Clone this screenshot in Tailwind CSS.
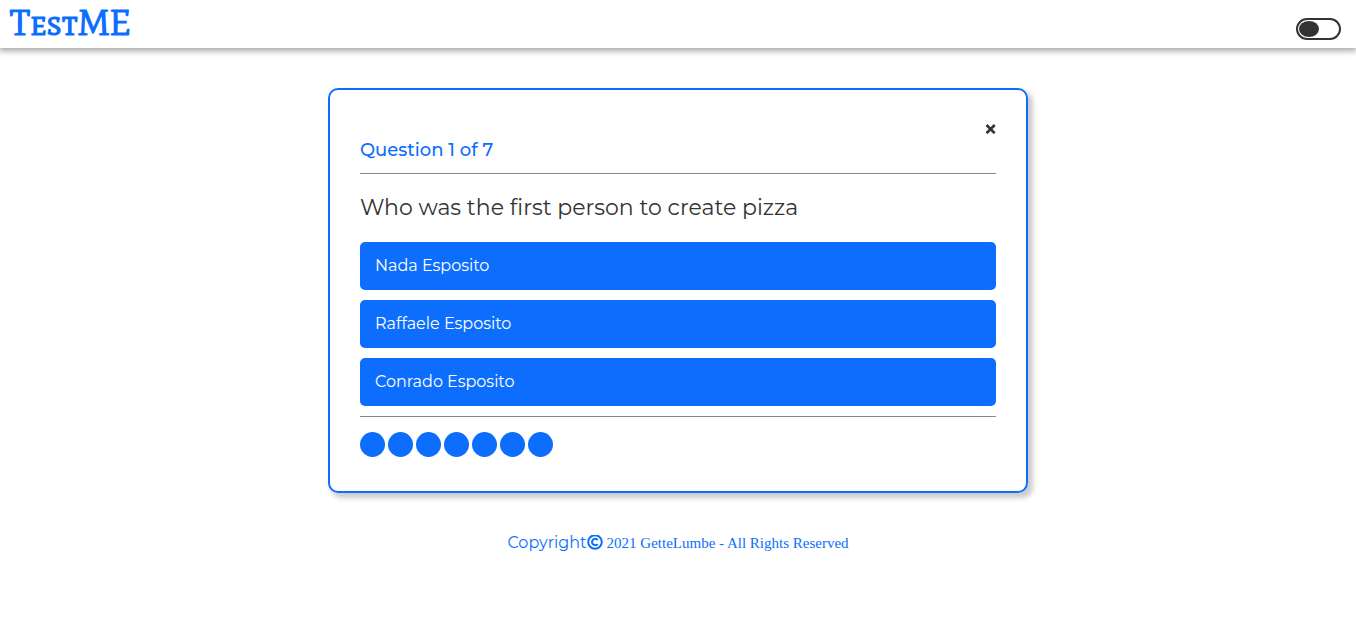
<!DOCTYPE html>
<html lang="en">
<head>
<meta charset="utf-8">
<meta name="viewport" content="width=device-width, initial-scale=1">
<title>TestME</title>
<script src="https://cdn.jsdelivr.net/npm/@tailwindcss/browser@4"></script>
</head>
<body class="bg-white font-['Montserrat','Inter',sans-serif] text-[#333333]">
<header class="flex h-12 items-start justify-between bg-white pl-[10px] pr-[15px] shadow-[0_2px_6px_1px_rgba(0,0,0,0.35)]">
  <a href="#" class="pt-[3px] font-['Mate_SC','Liberation_Serif',serif] text-[35px] leading-[40px] font-bold text-[#0d6efd]">TestME</a>
  <button type="button" role="switch" aria-checked="false" aria-label="Dark mode" class="mt-[18px] flex h-[22px] w-[45px] items-center rounded-full border-2 border-[#333333] pl-px">
    <span class="h-4 w-5 rounded-[50%] bg-[#333333]"></span>
  </button>
</header>
<main class="mx-auto mt-10 max-w-[700px] rounded-[10px] border-2 border-[#0d6efd] p-[30px] shadow-[4px_4px_5px_1px_rgba(0,0,0,0.2)]">
  <div class="flex h-[18px] items-center justify-end">
    <button type="button" aria-label="Close">
      <svg class="h-[10px] w-[11px]" viewBox="0 0 11 10" fill="none" stroke="#333333" stroke-width="2.600"><path d="M1.500 1 9.700 9.200M9.700 1 1.500 9.200"/></svg>
    </button>
  </div>
  <h1 class="border-b border-[#888888] pb-[11px] text-lg leading-6 font-medium text-[#0d6efd]">Question 1 of 7</h1>
  <h2 class="py-[18px] text-[22px] leading-8 font-normal">Who was the first person to create pizza</h2>
  <div class="flex flex-col gap-[10px] border-b border-[#888888] pb-[10px] text-base leading-6 font-normal text-white">
    <button type="button" class="h-12 rounded-[5px] bg-[#0d6efd] px-[15px] text-left">Nada Esposito</button>
    <button type="button" class="h-12 rounded-[5px] bg-[#0d6efd] px-[15px] text-left">Raffaele Esposito</button>
    <button type="button" class="h-12 rounded-[5px] bg-[#0d6efd] px-[15px] text-left">Conrado Esposito</button>
  </div>
  <div class="flex gap-[3px] pt-[15px] pb-1">
    <span class="size-[25px] rounded-full bg-[#0d6efd]"></span>
    <span class="size-[25px] rounded-full bg-[#0d6efd]"></span>
    <span class="size-[25px] rounded-full bg-[#0d6efd]"></span>
    <span class="size-[25px] rounded-full bg-[#0d6efd]"></span>
    <span class="size-[25px] rounded-full bg-[#0d6efd]"></span>
    <span class="size-[25px] rounded-full bg-[#0d6efd]"></span>
    <span class="size-[25px] rounded-full bg-[#0d6efd]"></span>
  </div>
</main>
<footer class="mt-[38px] flex items-center justify-center text-base leading-6 font-normal text-[#0d6efd]">
  <span>Copyright</span>
  <svg class="mr-1 size-4" viewBox="0 0 16 16" fill="none" stroke="#0d6efd" stroke-width="2" role="img" aria-label="Copyright"><circle cx="8" cy="7" r="6.800"/><path d="M10.700 5A3.200 3.200 0 1 0 10.700 9"/></svg>
  <span class="font-['Liberation_Serif',serif] text-[15px]">2021 GetteLumbe - All Rights Reserved</span>
</footer>
</body>
</html>
